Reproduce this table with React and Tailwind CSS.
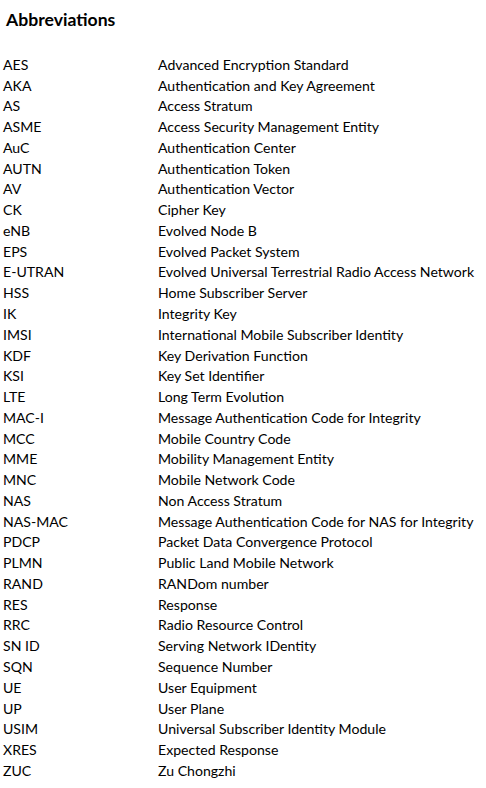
const rows = [
  ['AES', 'Advanced Encryption Standard'],
  ['AKA', 'Authentication and Key Agreement'],
  ['AS', 'Access Stratum'],
  ['ASME', 'Access Security Management Entity'],
  ['AuC', 'Authentication Center'],
  ['AUTN', 'Authentication Token'],
  ['AV', 'Authentication Vector'],
  ['CK', 'Cipher Key'],
  ['eNB', 'Evolved Node B'],
  ['EPS', 'Evolved Packet System'],
  ['E-UTRAN', 'Evolved Universal Terrestrial Radio Access Network'],
  ['HSS', 'Home Subscriber Server'],
  ['IK', 'Integrity Key'],
  ['IMSI', 'International Mobile Subscriber Identity'],
  ['KDF', 'Key Derivation Function'],
  ['KSI', 'Key Set Identifier'],
  ['LTE', 'Long Term Evolution'],
  ['MAC-I', 'Message Authentication Code for Integrity'],
  ['MCC', 'Mobile Country Code'],
  ['MME', 'Mobility Management Entity'],
  ['MNC', 'Mobile Network Code'],
  ['NAS', 'Non Access Stratum'],
  ['NAS-MAC', 'Message Authentication Code for NAS for Integrity'],
  ['PDCP', 'Packet Data Convergence Protocol'],
  ['PLMN', 'Public Land Mobile Network'],
  ['RAND', 'RANDom number'],
  ['RES', 'Response'],
  ['RRC', 'Radio Resource Control'],
  ['SN ID', 'Serving Network IDentity'],
  ['SQN', 'Sequence Number'],
  ['UE', 'User Equipment'],
  ['UP', 'User Plane'],
  ['USIM', 'Universal Subscriber Identity Module'],
  ['XRES', 'Expected Response'],
  ['ZUC', 'Zu Chongzhi'],
]

export default function App() {
  return (
    <div className="w-[486px] h-[788px] bg-white text-black font-['Lato',sans-serif]">
      <h1 className="pl-[6px] pt-[9px] text-[17.6px] font-bold leading-[22px]">Abbreviations</h1>
      <div className="mt-[23px] pl-[3px] text-[14.1px]">
        {rows.map(([abbr, full]) => (
          <div key={abbr} className="flex h-[20.77px] items-center">
            <span className="w-[155px] shrink-0">{abbr}</span>
            <span className="whitespace-nowrap">{full}</span>
          </div>
        ))}
      </div>
    </div>
  )
}
